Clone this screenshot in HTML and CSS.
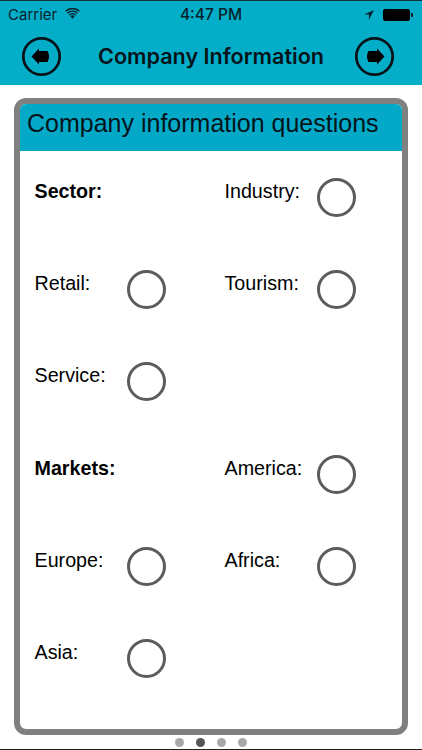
FILE: index.html
```html
<!DOCTYPE html>
<html lang="en">
<head>
<meta charset="utf-8">
<title>Company Information</title>
<link rel="stylesheet" href="styles.css">
</head>
<body>
<div class="screen">
  <header class="top">
    <div class="status">
      <div class="status-left">
        <span>Carrier</span>
        <svg class="wifi" viewBox="0 0 16 12"><path d="M8 11.6 5.7 9a3.3 3.3 0 0 1 4.6 0Z M3.9 7.2a5.8 5.8 0 0 1 8.2 0l-1.1 1.2a4.3 4.3 0 0 0-6 0Z M1.9 5.1a8.7 8.7 0 0 1 12.2 0L13 6.2a7.2 7.2 0 0 0-10 0Z M0 3a11.4 11.4 0 0 1 16 0l-1.1 1.1a9.9 9.9 0 0 0-13.8 0Z" fill="#06222c"/></svg>
      </div>
      <span class="time">4:47 PM</span>
      <div class="status-right">
        <svg class="loc" viewBox="0 0 10 10"><path d="M10 0 0 4.6h4.9V10Z" fill="#06222c"/></svg>
        <div class="battery"></div>
      </div>
    </div>
    <nav class="nav">
      <button class="nav-btn" aria-label="Back">
        <svg viewBox="0 0 41 41"><circle cx="20.5" cy="20.5" r="18.2" fill="none" stroke="#06141a" stroke-width="2.8"/><path d="M10.5 20.5 18 12.5V15H26.5Q29.5 20.5 26.5 26H18V28.5Z" fill="#000"/></svg>
      </button>
      <h1>Company Information</h1>
      <button class="nav-btn" aria-label="Next">
        <svg viewBox="0 0 41 41"><circle cx="20.5" cy="20.5" r="18.2" fill="none" stroke="#06141a" stroke-width="2.8"/><path d="M30.5 20.5 23 12.5V15H14.5Q11.5 20.5 14.5 26H23V28.5Z" fill="#000"/></svg>
      </button>
    </nav>
  </header>
  <main class="card">
    <h2 class="card-title">Company information questions</h2>
    <div class="form">
      <div class="item"><b class="label">Sector:</b></div>
      <div class="item"><span class="label">Industry:</span><span class="radio"></span></div>
      <div class="item"><span class="label">Retail:</span><span class="radio"></span></div>
      <div class="item"><span class="label">Tourism:</span><span class="radio"></span></div>
      <div class="item"><span class="label">Service:</span><span class="radio"></span></div>
      <div class="item"></div>
      <div class="item"><b class="label">Markets:</b></div>
      <div class="item"><span class="label">America:</span><span class="radio"></span></div>
      <div class="item"><span class="label">Europe:</span><span class="radio"></span></div>
      <div class="item"><span class="label">Africa:</span><span class="radio"></span></div>
      <div class="item"><span class="label">Asia:</span><span class="radio"></span></div>
      <div class="item"></div>
    </div>
  </main>
  <div class="dots"><i></i><i class="on"></i><i></i><i></i></div>
</div>
</body>
</html>
```
FILE: styles.css
```css
* { box-sizing: border-box; }
html, body { margin: 0; padding: 0; }
body { width: 422px; height: 750px; overflow: hidden; background: #fff; font-family: "Liberation Sans", Arial, sans-serif; color: #000; }
.screen { width: 422px; height: 750px; display: flex; flex-direction: column; border-bottom: 1px solid #222; }
.top { height: 85px; flex: none; background: #04aec8; border-top: 1px solid #16323c; }
.status { height: 27px; display: flex; align-items: center; justify-content: space-between; padding: 0 9px 0 8px; position: relative; font-size: 15px; color: #06222c; font-family: Inter, "Liberation Sans", sans-serif; }
.status-left { display: flex; align-items: center; gap: 8px; }
.wifi { width: 15px; height: 11px; margin-top: -3px; }
.time { position: absolute; left: 0; right: 0; text-align: center; font-weight: 500; font-size: 15.5px; }
.status-right { display: flex; align-items: center; gap: 9px; }
.loc { width: 10px; height: 10px; }
.battery { width: 27px; height: 12px; background: #000; border-radius: 2px; position: relative; margin-right: 3px; }
.battery::after { content: ""; position: absolute; left: 28px; top: 4px; width: 2px; height: 4px; background: #06222c; }
.nav { height: 56px; margin-bottom: 1px; display: flex; align-items: center; justify-content: space-between; padding: 0 27px 0 21px; }
.nav-btn { width: 41px; height: 41px; padding: 0; border: 0; background: none; display: block; }
.nav-btn svg { width: 41px; height: 41px; display: block; }
.nav h1 { margin: 0 0 0 6px; font-size: 21.6px; font-weight: 600; color: #06141a; font-family: Inter, "Liberation Sans", sans-serif; white-space: nowrap; }
.card { margin: 13px 14px 0; height: 637px; border: 6px solid #808080; border-radius: 12px; flex: none; overflow: hidden; }
.card-title { margin: 0; height: 47px; background: #04a9c8; font-size: 25px; font-weight: 400; line-height: 39px; padding-left: 7px; color: #06141a; white-space: nowrap; }
.form { display: grid; grid-template-columns: 190px 1fr; grid-auto-rows: 92.2px; padding: 27px 0 0 15px; }
.item { position: relative; font-size: 19.7px; line-height: 24px; }
.label { display: block; margin-left: -0.5px; padding-top: 1px; }
.radio { position: absolute; left: 92px; top: 0; width: 39px; height: 39px; border: 3.5px solid #5c5c5c; border-radius: 50%; background: #fff; }
.dots { display: flex; justify-content: center; gap: 12px; margin-top: 3px; }
.dots i { width: 9px; height: 9px; border-radius: 50%; background: #a8a8a8; display: block; }
.dots i.on { background: #555; }
```
